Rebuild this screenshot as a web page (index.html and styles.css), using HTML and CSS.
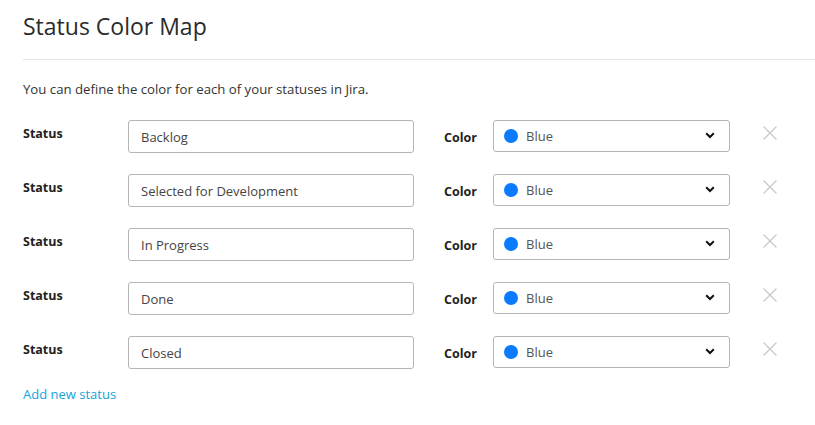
FILE: index.html
```html
<!DOCTYPE html>
<html>
<head>
<meta charset="utf-8">
<link rel="stylesheet" href="styles.css">
</head>
<body>
<div class="page">
  <h1 class="title">Status Color Map</h1>
  <div class="content">
    <p class="desc">You can define the color for each of your statuses in Jira.</p>
    <div class="rows">
      <div class="row">
        <label class="lbl-status">Status</label>
        <div class="input">Backlog</div>
        <label class="lbl-color">Color</label>
        <div class="select"><span class="dot"></span><span class="sel-text">Blue</span><svg class="chev" width="10" height="7" viewBox="0 0 10 7"><path d="M1.2 1.3 L5 5 L8.8 1.3" fill="none" stroke="#111" stroke-width="2"/></svg></div>
        <svg class="remove" width="14" height="14" viewBox="0 0 14 14"><path d="M0.5 0.5 L13.5 13.5 M13.5 0.5 L0.5 13.5" stroke="#c8c8c8" stroke-width="1.3"/></svg>
      </div>
      <div class="row">
        <label class="lbl-status">Status</label>
        <div class="input">Selected for Development</div>
        <label class="lbl-color">Color</label>
        <div class="select"><span class="dot"></span><span class="sel-text">Blue</span><svg class="chev" width="10" height="7" viewBox="0 0 10 7"><path d="M1.2 1.3 L5 5 L8.8 1.3" fill="none" stroke="#111" stroke-width="2"/></svg></div>
        <svg class="remove" width="14" height="14" viewBox="0 0 14 14"><path d="M0.5 0.5 L13.5 13.5 M13.5 0.5 L0.5 13.5" stroke="#c8c8c8" stroke-width="1.3"/></svg>
      </div>
      <div class="row">
        <label class="lbl-status">Status</label>
        <div class="input">In Progress</div>
        <label class="lbl-color">Color</label>
        <div class="select"><span class="dot"></span><span class="sel-text">Blue</span><svg class="chev" width="10" height="7" viewBox="0 0 10 7"><path d="M1.2 1.3 L5 5 L8.8 1.3" fill="none" stroke="#111" stroke-width="2"/></svg></div>
        <svg class="remove" width="14" height="14" viewBox="0 0 14 14"><path d="M0.5 0.5 L13.5 13.5 M13.5 0.5 L0.5 13.5" stroke="#c8c8c8" stroke-width="1.3"/></svg>
      </div>
      <div class="row">
        <label class="lbl-status">Status</label>
        <div class="input">Done</div>
        <label class="lbl-color">Color</label>
        <div class="select"><span class="dot"></span><span class="sel-text">Blue</span><svg class="chev" width="10" height="7" viewBox="0 0 10 7"><path d="M1.2 1.3 L5 5 L8.8 1.3" fill="none" stroke="#111" stroke-width="2"/></svg></div>
        <svg class="remove" width="14" height="14" viewBox="0 0 14 14"><path d="M0.5 0.5 L13.5 13.5 M13.5 0.5 L0.5 13.5" stroke="#c8c8c8" stroke-width="1.3"/></svg>
      </div>
      <div class="row">
        <label class="lbl-status">Status</label>
        <div class="input">Closed</div>
        <label class="lbl-color">Color</label>
        <div class="select"><span class="dot"></span><span class="sel-text">Blue</span><svg class="chev" width="10" height="7" viewBox="0 0 10 7"><path d="M1.2 1.3 L5 5 L8.8 1.3" fill="none" stroke="#111" stroke-width="2"/></svg></div>
        <svg class="remove" width="14" height="14" viewBox="0 0 14 14"><path d="M0.5 0.5 L13.5 13.5 M13.5 0.5 L0.5 13.5" stroke="#c8c8c8" stroke-width="1.3"/></svg>
      </div>
    </div>
    <a class="add" href="#">Add new status</a>
  </div>
</div>
</body>
</html>
```

FILE: styles.css
```css
* { box-sizing: border-box; }
html, body { margin: 0; padding: 0; background: #fff; }
body {
  font-family: "Open Sans", "Liberation Sans", sans-serif;
  color: #333;
}
.page {
  padding-left: 23px;
}
.title {
  margin: 0;
  padding-top: 12px;
  height: 60px;
  font-size: 23px;
  font-weight: 500;
  line-height: 28px;
  color: #2b2b2b;
  border-bottom: 1px solid #e6e6e6;
}
.content {
  padding-top: 20px;
}
.desc {
  margin: 0;
  font-size: 13.2px;
  line-height: 18px;
  color: #333;
}
.rows {
  margin-top: 22px;
  display: flex;
  flex-direction: column;
  gap: 22px;
}
.row {
  display: flex;
  align-items: flex-start;
  height: 32px;
}
.lbl-status {
  width: 105px;
  font-size: 12.5px;
  font-weight: 700;
  line-height: 16px;
  padding-top: 6px;
  color: #222;
}
.input {
  width: 286px;
  height: 33px;
  border: 1px solid #b5b5b5;
  border-radius: 3px;
  padding: 0 12px;
  font-size: 13px;
  line-height: 32px;
  color: #444;
}
.lbl-color {
  width: 79px;
  padding-left: 30px;
  font-size: 12.5px;
  font-weight: 700;
  line-height: 16px;
  padding-top: 10px;
  color: #222;
}
.select {
  width: 237px;
  height: 32px;
  border: 1px solid #b5b5b5;
  border-radius: 3px;
  display: flex;
  align-items: center;
  padding: 0 14px 0 10px;
}
.dot {
  width: 14px;
  height: 14px;
  border-radius: 50%;
  background: #0a7bff;
  margin-right: 8px;
  margin-top: -1px;
}
.sel-text {
  flex: 1;
  font-size: 13px;
  color: #555;
  line-height: 16px;
}
.chev {
  display: block;
  margin-top: -1px;
}
.remove {
  display: block;
  margin-left: 33px;
  margin-top: 6px;
}
.add {
  display: inline-block;
  margin-top: 17px;
  font-size: 13px;
  line-height: 18px;
  color: #16a3d8;
  text-decoration: none;
}
```
